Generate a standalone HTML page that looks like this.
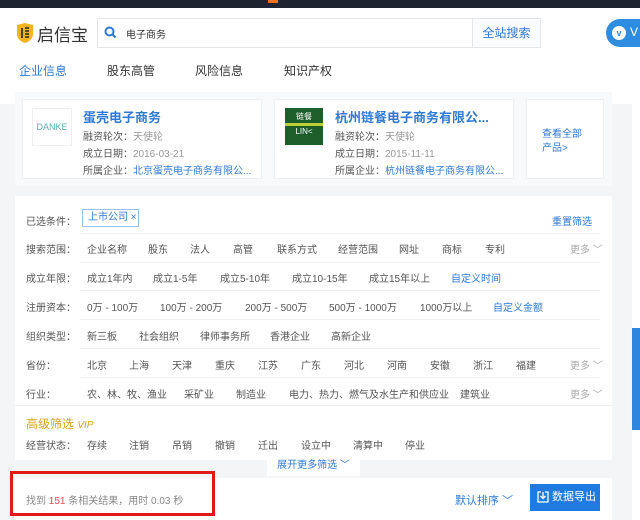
<!DOCTYPE html>
<html><head><meta charset="utf-8"><style>
*{margin:0;padding:0;box-sizing:border-box}
body{width:640px;height:520px;overflow:hidden;background:#f4f5f7;font-family:"Liberation Sans","Noto Sans CJK SC",sans-serif;font-size:10px;color:#555;position:relative}
.a{position:absolute;white-space:nowrap}
.blue{color:#2f7ad6}
.sep{position:absolute;left:80px;width:520px;height:1px;background:#eef0f2}
</style></head><body>
<div class="a" style="left:0;top:0;width:640px;height:8px;background:#1f2530"></div>
<div class="a" style="left:268px;top:0;width:10px;height:3px;background:#e8742a"></div>
<div class="a" style="left:0;top:8px;width:640px;height:96px;background:#fff"></div>
<svg class="a" style="left:15px;top:22px" width="20" height="22" viewBox="0 0 20 22"><path d="M2 3 L10 1 L18 3 L18 12 Q18 18 10 21 Q2 18 2 12Z" fill="#f0b51e"/><path d="M7 6v10M10 6h4M10 9h4M10 12h4M10 15h4" stroke="#222" stroke-width="1.6"/></svg>
<div class="a" style="left:37px;top:21px;font-size:17px;color:#333">启信宝</div>
<div class="a" style="left:97px;top:18px;width:444px;height:30px;border:1px solid #e4e6ea;background:#fff"></div>
<div class="a" style="left:472px;top:19px;width:68px;height:28px;border-left:1px solid #e4e6ea;background:#fafbfc;color:#2f7ad6;font-size:12px;line-height:28px;text-align:center">全站搜索</div>
<svg class="a" style="left:104px;top:26px" width="13" height="13" viewBox="0 0 13 13"><circle cx="5.5" cy="5.5" r="4" fill="none" stroke="#2f7ad6" stroke-width="2"/><path d="M8.5 8.5l3 3" stroke="#2f7ad6" stroke-width="2"/></svg>
<div class="a" style="left:126px;top:26px;font-size:10px;color:#333">电子商务</div>
<div class="a" style="left:606px;top:19px;width:50px;height:28px;border-radius:14px;background:#2e8de0"></div>
<div class="a" style="left:612px;top:26px;width:14px;height:14px;border-radius:7px;background:#fff;color:#2e8de0;font-size:9px;line-height:14px;text-align:center;font-weight:bold">v</div>
<div class="a" style="left:630px;top:25px;color:#fff;font-size:12px">V</div>
<div class="a blue" style="left:19px;top:62px;font-size:12px">企业信息</div>
<div class="a" style="left:107px;top:62px;font-size:12px;color:#333">股东高管</div>
<div class="a" style="left:195px;top:62px;font-size:12px;color:#333">风险信息</div>
<div class="a" style="left:284px;top:62px;font-size:12px;color:#333">知识产权</div>
<div class="a" style="left:15px;top:100px;width:53px;height:3px;background:#2f7ad6"></div>
<div class="a" style="left:15px;top:92px;width:597px;height:94px;background:#f8f9fa"></div>
<div class="a" style="left:22px;top:99px;width:240px;height:80px;background:#fff;border:1px solid #eef0f2"></div>
<div class="a" style="left:274px;top:99px;width:240px;height:80px;background:#fff;border:1px solid #eef0f2"></div>
<div class="a" style="left:526px;top:99px;width:78px;height:80px;background:#fff;border:1px solid #eef0f2"></div>
<div class="a" style="left:32px;top:108px;width:40px;height:38px;border:1px solid #eee;background:#fff;color:#5ab0b0;font-size:9px;line-height:36px;text-align:center">DANKE</div>
<div class="a" style="left:285px;top:108px;width:38px;height:37px;background:#1d5e2a;color:#fff;font-size:8px;text-align:center;line-height:12px;padding-top:3px">链餐<br><span style="display:block;background:#b9cf3a;height:3px"></span>LIN&lt;</div>
<div class="a blue" style="left:83px;top:107px;font-size:13px;font-weight:bold">蛋壳电子商务</div>
<div class="a" style="left:83px;top:128px">融资轮次：<span style="color:#999">天使轮</span></div>
<div class="a" style="left:83px;top:145px">成立日期：<span style="color:#999">2016-03-21</span></div>
<div class="a" style="left:83px;top:162px">所属企业：<span class="blue">北京蛋壳电子商务有限公...</span></div>
<div class="a blue" style="left:335px;top:107px;font-size:13px;font-weight:bold">杭州链餐电子商务有限公...</div>
<div class="a" style="left:335px;top:128px">融资轮次：<span style="color:#999">天使轮</span></div>
<div class="a" style="left:335px;top:145px">成立日期：<span style="color:#999">2015-11-11</span></div>
<div class="a" style="left:335px;top:162px">所属企业：<span class="blue">杭州链餐电子商务有限公...</span></div>
<div class="a blue" style="left:542px;top:128px;line-height:14px">查看全部<br>产品&gt;</div>
<div class="a" style="left:632px;top:92px;width:8px;height:428px;background:#fff"></div>
<div class="a" style="left:632px;top:328px;width:8px;height:102px;background:#2e86de"></div>
<div class="a" style="left:15px;top:196px;width:597px;height:264px;background:#fff"></div>
<div class="a" style="left:26px;top:213px">已选条件：</div>
<div class="a blue" style="left:82px;top:209px;width:57px;height:18px;border:1px solid #9cc0ea;line-height:16px;padding-left:5px">上市公司 ×</div>
<div class="a blue" style="left:552px;top:213px">重置筛选</div>
<div class="sep" style="top:233px"></div><div class="sep" style="top:262px"></div><div class="sep" style="top:290px"></div><div class="sep" style="top:319px"></div><div class="sep" style="top:348px"></div><div class="sep" style="top:377px"></div>
<div class="a" style="left:15px;top:405px;width:597px;height:1px;background:#eef0f2"></div>
<div class="a" style="left:26px;top:241px">搜索范围：</div>
<div class="a" style="left:87px;top:241px">企业名称</div><div class="a" style="left:148px;top:241px">股东</div><div class="a" style="left:190px;top:241px">法人</div><div class="a" style="left:233px;top:241px">高管</div><div class="a" style="left:277px;top:241px">联系方式</div><div class="a" style="left:338px;top:241px">经营范围</div><div class="a" style="left:399px;top:241px">网址</div><div class="a" style="left:442px;top:241px">商标</div><div class="a" style="left:485px;top:241px">专利</div><div class="a" style="left:570px;top:241px;color:#aaa">更多 ﹀</div>
<div class="a" style="left:26px;top:270px">成立年限：</div>
<div class="a" style="left:87px;top:270px">成立1年内</div><div class="a" style="left:153px;top:270px">成立1-5年</div><div class="a" style="left:220px;top:270px">成立5-10年</div><div class="a" style="left:292px;top:270px">成立10-15年</div><div class="a" style="left:369px;top:270px">成立15年以上</div><div class="a blue" style="left:451px;top:270px">自定义时间</div>
<div class="a" style="left:26px;top:299px">注册资本：</div>
<div class="a" style="left:87px;top:299px">0万 - 100万</div><div class="a" style="left:160px;top:299px">100万 - 200万</div><div class="a" style="left:245px;top:299px">200万 - 500万</div><div class="a" style="left:329px;top:299px">500万 - 1000万</div><div class="a" style="left:420px;top:299px">1000万以上</div><div class="a blue" style="left:493px;top:299px">自定义金额</div>
<div class="a" style="left:26px;top:328px">组织类型：</div>
<div class="a" style="left:87px;top:328px">新三板</div><div class="a" style="left:139px;top:328px">社会组织</div><div class="a" style="left:200px;top:328px">律师事务所</div><div class="a" style="left:270px;top:328px">香港企业</div><div class="a" style="left:331px;top:328px">高新企业</div>
<div class="a" style="left:26px;top:357px">省份：</div>
<div class="a" style="left:87px;top:357px">北京</div><div class="a" style="left:129px;top:357px">上海</div><div class="a" style="left:172px;top:357px">天津</div><div class="a" style="left:215px;top:357px">重庆</div><div class="a" style="left:258px;top:357px">江苏</div><div class="a" style="left:301px;top:357px">广东</div><div class="a" style="left:344px;top:357px">河北</div><div class="a" style="left:387px;top:357px">河南</div><div class="a" style="left:430px;top:357px">安徽</div><div class="a" style="left:473px;top:357px">浙江</div><div class="a" style="left:516px;top:357px">福建</div><div class="a" style="left:570px;top:357px;color:#aaa">更多 ﹀</div>
<div class="a" style="left:26px;top:386px">行业：</div>
<div class="a" style="left:87px;top:386px">农、林、牧、渔业</div><div class="a" style="left:184px;top:386px">采矿业</div><div class="a" style="left:236px;top:386px">制造业</div><div class="a" style="left:289px;top:386px">电力、热力、燃气及水生产和供应业</div><div class="a" style="left:460px;top:386px">建筑业</div><div class="a" style="left:570px;top:386px;color:#aaa">更多 ﹀</div>
<div class="a" style="left:26px;top:415px;font-size:12px;color:#d9a520">高级筛选 <i style="font-size:10px">VIP</i></div>
<div class="a" style="left:26px;top:437px">经营状态：</div>
<div class="a" style="left:87px;top:437px">存续</div><div class="a" style="left:129px;top:437px">注销</div><div class="a" style="left:172px;top:437px">吊销</div><div class="a" style="left:215px;top:437px">撤销</div><div class="a" style="left:258px;top:437px">迁出</div><div class="a" style="left:301px;top:437px">设立中</div><div class="a" style="left:353px;top:437px">清算中</div><div class="a" style="left:405px;top:437px">停业</div>
<div class="a blue" style="left:267px;top:456px;width:93px;height:20px;background:#fff;text-align:center;line-height:20px">展开更多筛选 ﹀</div>
<div class="a" style="left:15px;top:478px;width:597px;height:42px;background:#fff"></div>
<div class="a" style="left:26px;top:492px;color:#888">找到 <span style="color:#d9534f">151</span> 条相关结果，用时 0.03 秒</div>
<div class="a" style="left:10px;top:471px;width:205px;height:45px;border:3px solid #e01a1a"></div>
<div class="a blue" style="left:455px;top:492px;font-size:11px">默认排序 ﹀</div>
<div class="a" style="left:530px;top:484px;width:70px;height:27px;background:#1f7be0;color:#fff;font-size:11px;line-height:27px;padding-left:22px">数据导出</div>
<svg class="a" style="left:537px;top:491px" width="12" height="12" viewBox="0 0 12 12"><path d="M4 1H1v10h10V1H8M6 1v6M3.5 5L6 7.5 8.5 5" fill="none" stroke="#fff" stroke-width="1.3"/></svg>
</body></html>
